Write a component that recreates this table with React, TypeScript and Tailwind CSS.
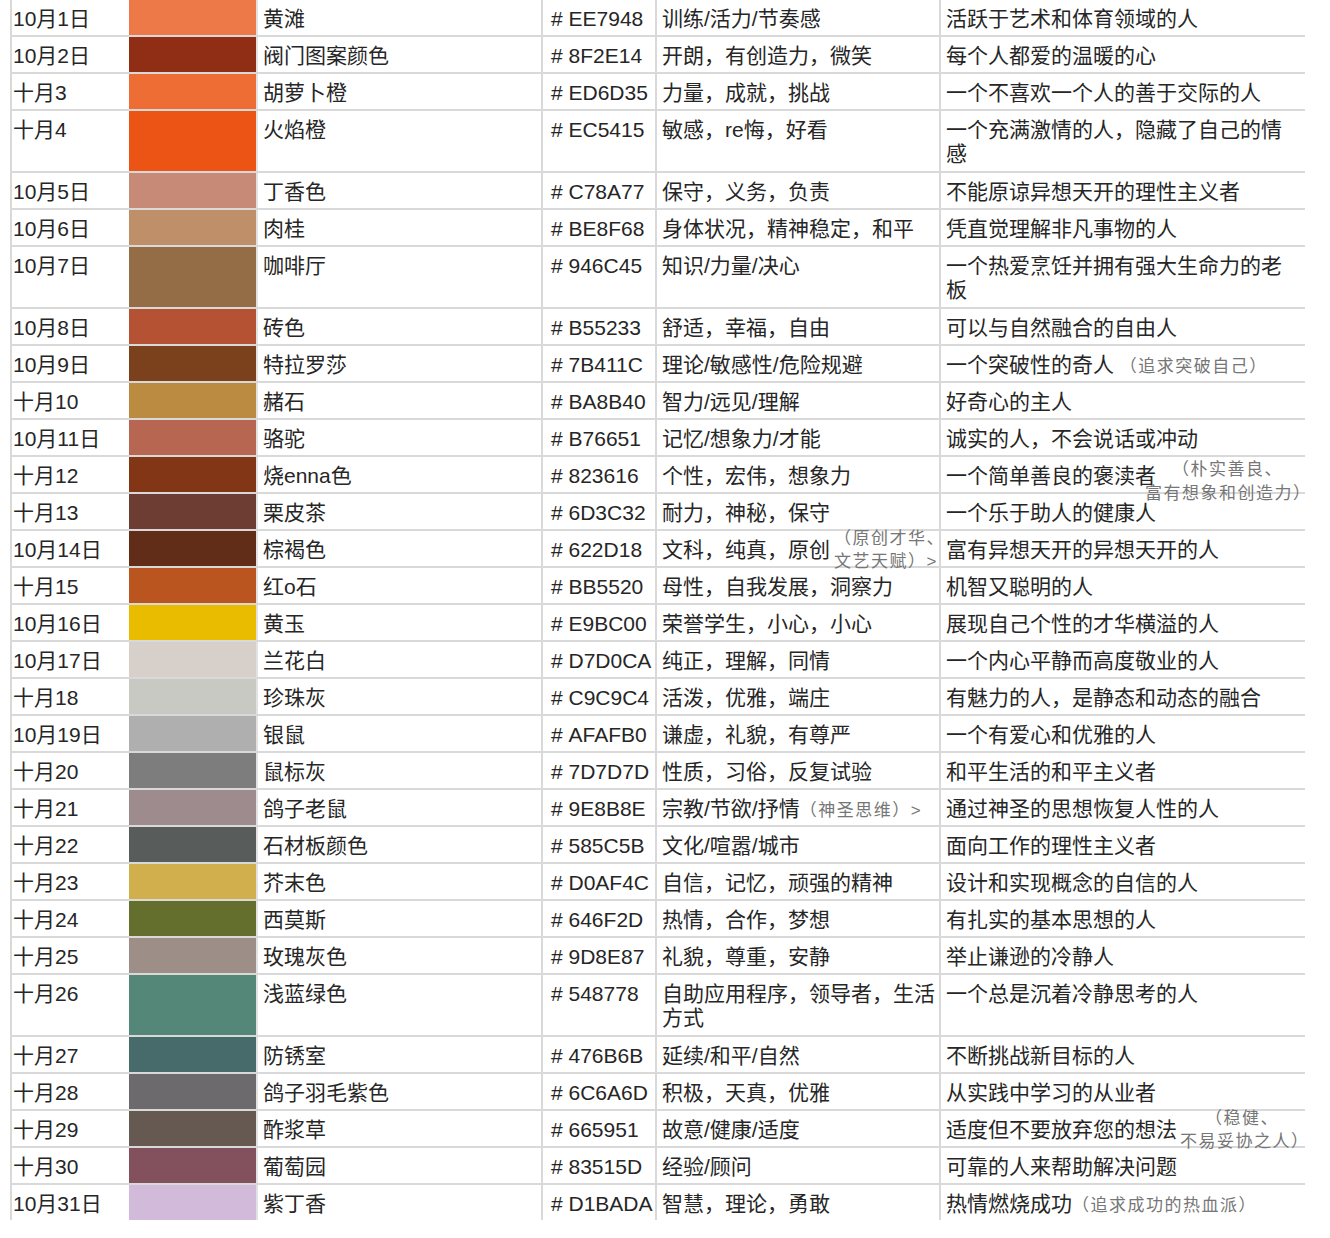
import React from 'react';

type Row = {
  date: string;
  hex: string;
  name: string;
  words: React.ReactNode;
  desc: React.ReactNode;
  tall?: boolean;
};

const note = 'text-[17px] tracking-[1.5px] text-[#767676]';
const float = 'absolute whitespace-nowrap text-[17px] leading-[22px] tracking-[1.5px] text-[#767676]';

const rows: Row[] = [
  { date: '10月1日', hex: 'EE7948', name: '黄滩', words: '训练/活力/节奏感', desc: '活跃于艺术和体育领域的人' },
  { date: '10月2日', hex: '8F2E14', name: '阀门图案颜色', words: '开朗，有创造力，微笑', desc: '每个人都爱的温暖的心' },
  { date: '十月3', hex: 'ED6D35', name: '胡萝卜橙', words: '力量，成就，挑战', desc: '一个不喜欢一个人的善于交际的人' },
  { date: '十月4', hex: 'EC5415', name: '火焰橙', words: '敏感，re悔，好看', desc: '一个充满激情的人，隐藏了自己的情\n感', tall: true },
  { date: '10月5日', hex: 'C78A77', name: '丁香色', words: '保守，义务，负责', desc: '不能原谅异想天开的理性主义者' },
  { date: '10月6日', hex: 'BE8F68', name: '肉桂', words: '身体状况，精神稳定，和平', desc: '凭直觉理解非凡事物的人' },
  { date: '10月7日', hex: '946C45', name: '咖啡厅', words: '知识/力量/决心', desc: '一个热爱烹饪并拥有强大生命力的老\n板', tall: true },
  { date: '10月8日', hex: 'B55233', name: '砖色', words: '舒适，幸福，自由', desc: '可以与自然融合的自由人' },
  {
    date: '10月9日', hex: '7B411C', name: '特拉罗莎', words: '理论/敏感性/危险规避',
    desc: <>一个突破性的奇人 <span className={note}>（追求突破自己）</span></>,
  },
  { date: '十月10', hex: 'BA8B40', name: '赭石', words: '智力/远见/理解', desc: '好奇心的主人' },
  { date: '10月11日', hex: 'B76651', name: '骆驼', words: '记忆/想象力/才能', desc: '诚实的人，不会说话或冲动' },
  {
    date: '十月12', hex: '823616', name: '烧enna色', words: '个性，宏伟，想象力',
    desc: (
      <>
        一个简单善良的褒渎者
        <span className={`${float} left-[231px] top-[2px]`}>（朴实善良、</span>
        <span className={`${float} left-[204px] top-[26px]`}>富有想象和创造力）</span>
      </>
    ),
  },
  { date: '十月13', hex: '6D3C32', name: '栗皮茶', words: '耐力，神秘，保守', desc: '一个乐于助人的健康人' },
  {
    date: '10月14日', hex: '622D18', name: '棕褐色',
    words: (
      <>
        文科，纯真，原创
        <span className={`${float} left-[177px] top-[-3px]`}>（原创才华、</span>
        <span className={`${float} left-[177px] top-[20px]`}>文艺天赋）&gt;</span>
      </>
    ),
    desc: '富有异想天开的异想天开的人',
  },
  { date: '十月15', hex: 'BB5520', name: '红o石', words: '母性，自我发展，洞察力', desc: '机智又聪明的人' },
  { date: '10月16日', hex: 'E9BC00', name: '黄玉', words: '荣誉学生，小心，小心', desc: '展现自己个性的才华横溢的人' },
  { date: '10月17日', hex: 'D7D0CA', name: '兰花白', words: '纯正，理解，同情', desc: '一个内心平静而高度敬业的人' },
  { date: '十月18', hex: 'C9C9C4', name: '珍珠灰', words: '活泼，优雅，端庄', desc: '有魅力的人，是静态和动态的融合' },
  { date: '10月19日', hex: 'AFAFB0', name: '银鼠', words: '谦虚，礼貌，有尊严', desc: '一个有爱心和优雅的人' },
  { date: '十月20', hex: '7D7D7D', name: '鼠标灰', words: '性质，习俗，反复试验', desc: '和平生活的和平主义者' },
  {
    date: '十月21', hex: '9E8B8E', name: '鸽子老鼠',
    words: <>宗教/节欲/抒情<span className={note}>（神圣思维）&gt;</span></>,
    desc: '通过神圣的思想恢复人性的人',
  },
  { date: '十月22', hex: '585C5B', name: '石材板颜色', words: '文化/喧嚣/城市', desc: '面向工作的理性主义者' },
  { date: '十月23', hex: 'D0AF4C', name: '芥末色', words: '自信，记忆，顽强的精神', desc: '设计和实现概念的自信的人' },
  { date: '十月24', hex: '646F2D', name: '西莫斯', words: '热情，合作，梦想', desc: '有扎实的基本思想的人' },
  { date: '十月25', hex: '9D8E87', name: '玫瑰灰色', words: '礼貌，尊重，安静', desc: '举止谦逊的冷静人' },
  { date: '十月26', hex: '548778', name: '浅蓝绿色', words: '自助应用程序，领导者，生活\n方式', desc: '一个总是沉着冷静思考的人', tall: true },
  { date: '十月27', hex: '476B6B', name: '防锈室', words: '延续/和平/自然', desc: '不断挑战新目标的人' },
  { date: '十月28', hex: '6C6A6D', name: '鸽子羽毛紫色', words: '积极，天真，优雅', desc: '从实践中学习的从业者' },
  {
    date: '十月29', hex: '665951', name: '酢浆草', words: '故意/健康/适度',
    desc: (
      <>
        适度但不要放弃您的想法
        <span className={`${float} left-[264px] top-[-3px]`}>（稳健、</span>
        <span className={`${float} left-[239px] top-[20px]`}>不易妥协之人）</span>
      </>
    ),
  },
  { date: '十月30', hex: '83515D', name: '葡萄园', words: '经验/顾问', desc: '可靠的人来帮助解决问题' },
  {
    date: '10月31日', hex: 'D1BADA', name: '紫丁香', words: '智慧，理论，勇敢',
    desc: <>热情燃烧成功<span className={note}>（追求成功的热血派）</span></>,
  },
];

export default function App() {
  return (
    <div
      className="min-h-[1238px] bg-white pl-[10px] text-[21px] leading-[24px] text-[#262626]"
      style={{ fontFamily: '"Liberation Sans", "Noto Sans CJK SC", sans-serif' }}
    >
      <div className="w-[1295px]">
        {rows.map((r, i) => (
          <div
            key={r.date}
            className={`grid grid-cols-[117px_129px_285px_114px_284px_364px] border-l-2 border-[#d9d9d9] ${
              i < rows.length - 1 ? 'border-b-2' : ''
            } ${r.tall ? 'h-[62px]' : i < rows.length - 1 ? 'h-[37px]' : 'h-[35px]'}`}
          >
            <div className="whitespace-nowrap pl-[1px] pt-[7px]">{r.date}</div>
            <div className="border-r-2 border-[#e2e2e2]" style={{ backgroundColor: `#${r.hex}` }} />
            <div className="border-r-2 border-[#d9d9d9] pl-[5px] pt-[7px]">{r.name}</div>
            <div className="whitespace-nowrap border-r-2 border-[#d9d9d9] pl-[8px] pt-[7px]">
              #&nbsp;{r.hex}
            </div>
            <div className="relative whitespace-pre-line border-r-2 border-[#d9d9d9] pl-[5px] pt-[7px]">
              {r.words}
            </div>
            <div className="relative whitespace-pre-line pl-[5px] pt-[7px]">{r.desc}</div>
          </div>
        ))}
      </div>
    </div>
  );
}
